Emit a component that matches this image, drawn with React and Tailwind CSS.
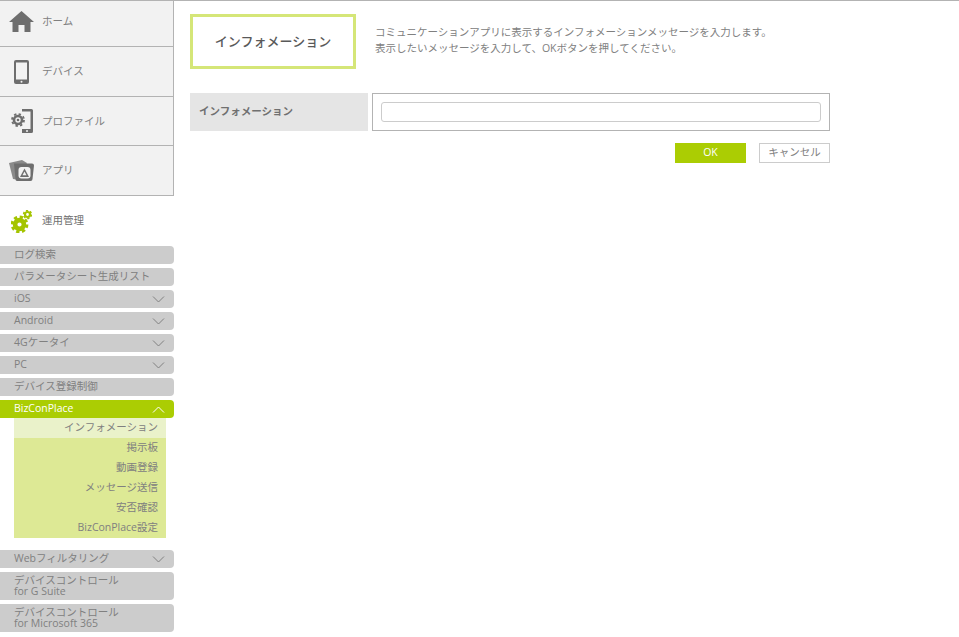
const font = { fontFamily: '"Open Sans", "Noto Sans CJK JP", sans-serif' };

function Chevron({ up }) {
  return (
    <svg width="13" height="7" viewBox="0 0 13 7" className="mr-[9px]" fill="none" stroke={up ? "#ffffff" : "#808080"} strokeWidth="1">
      {up ? <path d="M1 6.5 L6.5 1 L12 6.5" /> : <path d="M1 .5 L6.5 6 L12 .5" />}
    </svg>
  );
}

function HomeIcon() {
  return (
    <svg width="25" height="21" viewBox="0 0 25 21" fill="#6e6e6e">
      <path d="M12.5 0 L25 11 L21.5 11 L21.5 21 L15.5 21 L15.5 14 L9.5 14 L9.5 21 L3.5 21 L3.5 11 L0 11 Z" />
    </svg>
  );
}

function DeviceIcon() {
  return (
    <svg width="15" height="24" viewBox="0 0 15 24">
      <rect x="0" y="0" width="15" height="24" rx="2" fill="#6e6e6e" />
      <rect x="2" y="2.5" width="11" height="17" fill="#f2f2f2" />
      <circle cx="7.5" cy="21.7" r="1" fill="#f2f2f2" />
    </svg>
  );
}

function ProfileIcon() {
  return (
    <svg width="22" height="24" viewBox="0 0 22 24">
      <path d="M11 0 L20.5 0 Q22 0 22 1.5 L22 22.5 Q22 24 20.5 24 L11 24 L11 20 L19.5 20 L19.5 2.5 L11 2.5 Z" fill="#6e6e6e" />
      <circle cx="16" cy="22" r="1" fill="#f2f2f2" />
      <circle cx="7" cy="11" r="4" fill="none" stroke="#6e6e6e" strokeWidth="2.6" />
      <circle cx="7" cy="11" r="6" fill="none" stroke="#6e6e6e" strokeWidth="1.8" strokeDasharray="2.4 2.3" />
      <circle cx="7" cy="11" r="1.3" fill="#6e6e6e" />
    </svg>
  );
}

function AppIcon() {
  return (
    <svg width="25" height="21" viewBox="0 0 25 21">
      <path d="M0 3 L13 0 L18 3 L10 20 L4 19 Z" fill="#8a8a8a" />
      <path d="M5 3.5 L23 3.5 Q25 3.5 25 5.5 L23.5 19 Q23.5 21 21.5 21 L8 21 Q6.5 21 6.5 19 Z" fill="#6e6e6e" />
      <rect x="9.5" y="7" width="12" height="11.5" rx="3" fill="#f2f2f2" />
      <path d="M15.5 8.5 L20 17 L11 17 Z" fill="#6e6e6e" />
      <path d="M15.5 11.5 L17.5 15.3 L13.5 15.3 Z" fill="#f2f2f2" />
    </svg>
  );
}

function GearsIcon() {
  return (
    <svg width="21" height="23" viewBox="0 0 21 23" fill="none" stroke="#a4c400">
      <circle cx="8.5" cy="14.5" r="4.4" strokeWidth="4.6" />
      <circle cx="8.5" cy="14.5" r="7.3" strokeWidth="3.2" strokeDasharray="3.2 2.53" />
      <circle cx="16.5" cy="4.5" r="2.5" strokeWidth="2.2" />
      <circle cx="16.5" cy="4.5" r="3.9" strokeWidth="1.6" strokeDasharray="2.2 1.89" />
    </svg>
  );
}

const topMenu = [
  { label: "ホーム", icon: <HomeIcon />, row: "h-[46px] border-b pb-1", text: "" },
  { label: "デバイス", icon: <DeviceIcon />, row: "h-[50px] border-b", text: "" },
  { label: "プロファイル", icon: <ProfileIcon />, row: "h-[49px] border-b", text: "pt-[1px]" },
  { label: "アプリ", icon: <AppIcon />, row: "h-[49px]", text: "pt-[1px]" },
];

const subItems = ["インフォメーション", "掲示板", "動画登録", "メッセージ送信", "安否確認", "BizConPlace設定"];

function MenuBar({ children, arrow }) {
  return (
    <div className="flex h-[18px] items-center justify-between rounded-r-[4px] bg-[#cccccc] pl-[14px] text-[10.5px] text-[#808080]">
      <span>{children}</span>
      {arrow && <Chevron />}
    </div>
  );
}

function TwoLineBar({ line1, line2 }) {
  return (
    <div className="flex h-[28px] flex-col justify-center rounded-r-[4px] bg-[#cccccc] pb-[1px] pl-[14px] text-[10.5px] leading-[11px] text-[#808080]">
      <div>{line1}</div>
      <div>{line2}</div>
    </div>
  );
}

export default function App() {
  return (
    <div style={font} className="flex h-[637px] w-[959px] overflow-hidden border-t border-[#b3b3b3] bg-white">
      <aside className="w-[174px] shrink-0">
        <div className="border-r border-b border-[#b3b3b3]">
          {topMenu.map((m) => (
            <div key={m.label} className={`flex items-center border-[#b3b3b3] bg-[#f2f2f2] ${m.row}`}>
              <div className="flex w-[42px] shrink-0 justify-center pl-[1px]">{m.icon}</div>
              <span className={`text-[10.5px] text-[#808080] ${m.text}`}>{m.label}</span>
            </div>
          ))}
        </div>
        <div className="flex h-[50px] items-center">
          <div className="flex w-[42px] shrink-0 justify-center">
            <GearsIcon />
          </div>
          <span className="text-[10.5px] text-[#707070]">運用管理</span>
        </div>
        <div className="flex flex-col gap-1">
          <MenuBar>ログ検索</MenuBar>
          <MenuBar>パラメータシート生成リスト</MenuBar>
          <MenuBar arrow>iOS</MenuBar>
          <MenuBar arrow>Android</MenuBar>
          <MenuBar arrow>4Gケータイ</MenuBar>
          <MenuBar arrow>PC</MenuBar>
          <MenuBar>デバイス登録制御</MenuBar>
          <div>
            <div className="flex h-[18px] items-center justify-between rounded-r-[4px] bg-[#abcd03] pl-[14px] text-[10.5px] text-white">
              <span>BizConPlace</span>
              <Chevron up />
            </div>
            <div className="mr-2 ml-[14px] bg-[#dde995]">
              {subItems.map((s, i) => (
                <div key={s} className={`flex h-5 items-center justify-end pr-2 text-[10.5px] text-[#808080] ${i === 0 ? "bg-[#eaf2ca]" : ""}`}>
                  {s}
                </div>
              ))}
            </div>
          </div>
          <div className="mt-2">
            <MenuBar arrow>Webフィルタリング</MenuBar>
          </div>
          <TwoLineBar line1="デバイスコントロール" line2="for G Suite" />
          <TwoLineBar line1="デバイスコントロール" line2="for Microsoft 365" />
        </div>
      </aside>
      <main className="w-[656px] pt-[13px] pl-4">
        <div className="flex items-center">
          <div className="flex h-[55px] w-[166px] shrink-0 items-center justify-center border-[3px] border-[#d5e678] text-[13px] font-medium text-[#595959]">
            インフォメーション
          </div>
          <div className="pb-1 pl-[19px] text-[10.5px] leading-[16px] text-[#808080]">
            <p>コミュニケーションアプリに表示するインフォメーションメッセージを入力します。</p>
            <p>表示したいメッセージを入力して、OKボタンを押してください。</p>
          </div>
        </div>
        <div className="mt-6 flex h-[38px] gap-1">
          <div className="flex w-[178px] items-center bg-[#e5e5e5] pl-[9px] text-[10.5px] font-bold text-[#707070]">インフォメーション</div>
          <div className="flex flex-1 items-center border border-[#b3b3b3] px-2">
            <input className="h-5 w-full rounded-[3px] border border-[#cccccc] bg-white outline-none" />
          </div>
        </div>
        <div className="mt-3 flex justify-end gap-[13px]">
          <button className="h-5 w-[71px] bg-[#abcd03] text-[10.5px] font-medium text-white">OK</button>
          <button className="h-5 w-[71px] border border-[#cccccc] bg-white text-[10.5px] text-[#808080]">キャンセル</button>
        </div>
      </main>
    </div>
  );
}
